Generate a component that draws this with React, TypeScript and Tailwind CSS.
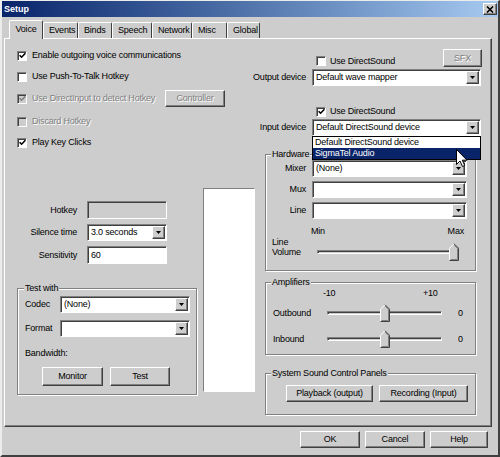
import React from "react";

const RAISED =
  "border border-t-white border-l-white border-r-[#404040] border-b-[#404040] shadow-[inset_-1px_-1px_0_#808080]";
const SUNKEN =
  "border border-t-[#808080] border-l-[#808080] border-r-white border-b-white shadow-[inset_1px_1px_0_#404040]";
const GROUP =
  "border border-[#808080] shadow-[inset_1px_1px_0_#ffffff,1px_1px_0_#ffffff]";
const DIS = "text-[#808080] [text-shadow:1px_1px_0_#ffffff]";

function Check({ checked, disabled }: { checked?: boolean; disabled?: boolean }) {
  return (
    <span
      className={`flex items-center justify-center w-[10px] h-[10px] shrink-0 ${SUNKEN} ${
        disabled ? "bg-[#cdcdcd]" : "bg-white"
      }`}
    >
      {checked && (
        <svg width="7" height="7" viewBox="0 0 7 7">
          <path
            d="M0.6 3.2 L2.6 5.2 L6.4 1.2"
            stroke={disabled ? "#808080" : "#000"}
            strokeWidth="1.6"
            fill="none"
          />
        </svg>
      )}
    </span>
  );
}

function DropBtn() {
  return (
    <span className={`flex items-center justify-center w-[13px] h-full bg-[#cdcdcd] ${RAISED}`}>
      <svg width="5" height="3" viewBox="0 0 5 3">
        <path d="M0 0h5L2.5 3z" fill="#000" />
      </svg>
    </span>
  );
}

function Select({ value, className }: { value?: string; className: string }) {
  return (
    <div className={`flex h-[17px] bg-white p-[1px] ${SUNKEN} ${className}`}>
      <span className="flex-1 flex items-center pl-[2px] whitespace-nowrap overflow-hidden">{value}</span>
      <DropBtn />
    </div>
  );
}

function Btn({
  children,
  className,
  disabled,
}: {
  children: React.ReactNode;
  className: string;
  disabled?: boolean;
}) {
  return (
    <div
      className={`flex items-center justify-center bg-[#cdcdcd] ${RAISED} ${className} ${
        disabled ? DIS : ""
      }`}
    >
      {children}
    </div>
  );
}

function Thumb() {
  return (
    <svg width="10" height="18" viewBox="0 0 10 18">
      <path d="M0 5 L5 0 L10 5 V18 H0 Z" fill="#cdcdcd" />
      <path d="M0.5 17.5 V5.2 L5 0.7" stroke="#fff" fill="none" />
      <path d="M5 0.7 L9.5 5.2 V17.5 H0.5" stroke="#404040" fill="none" />
      <path d="M5.2 2.2 L8.5 5.6 V16.5 H1.5" stroke="#808080" fill="none" />
    </svg>
  );
}

function Slider({ className, thumb }: { className: string; thumb: string }) {
  return (
    <div className={`relative h-[20px] ${className}`}>
      <div className={`mt-[8px] h-[4px] ${SUNKEN} bg-[#cdcdcd]`} />
      <div className={`absolute top-[1px] ${thumb}`}>
        <Thumb />
      </div>
    </div>
  );
}

export default function App() {
  return (
    <div className="relative w-[500px] h-[457px] overflow-hidden bg-[#cdcdcd] font-['Liberation_Sans',Arial,sans-serif] text-[9px] tracking-[-0.2px] leading-none text-black border-l-2 border-r-2 border-t border-b-2 border-l-[#ececec] border-r-[#404040] border-t-[#ececec] border-b-[#404040] flex flex-col select-none">
      {/* Title bar */}
      <div className="h-[16px] shrink-0 flex items-center justify-between bg-linear-to-r from-[#0a246a] to-[#a6caf0] pl-[2px] pr-[1px]">
        <span className="text-white font-bold text-[9px] tracking-[0px]">Setup</span>
        <span className={`w-[14px] h-[12px] flex items-center justify-center bg-[#cdcdcd] ${RAISED}`}>
          <svg width="8" height="7" viewBox="0 0 8 7">
            <path d="M1 0.5 L7 6.5 M7 0.5 L1 6.5" stroke="#000" strokeWidth="1.6" />
          </svg>
        </span>
      </div>

      <div className="flex flex-col px-[2px]">
        {/* Tabs */}
        <div className="mt-[4px] h-[17px] flex items-end pl-[5px]">
          <div className="relative z-10 -mb-px w-[34px] h-[19px] flex items-center justify-center bg-[#cdcdcd] border-t border-l border-r border-t-white border-l-white border-r-[#404040] rounded-t-[2px] pb-[2px]">
            Voice
          </div>
          {[
            ["Events", "w-[35px]"],
            ["Binds", "w-[34px]"],
            ["Speech", "w-[40px]"],
            ["Network", "w-[40px]"],
            ["Misc", "w-[35px]"],
            ["Global", "w-[33px]"],
          ].map(([t, w]) => (
            <div
              key={t}
              className={`${w} h-[16px] flex items-center justify-start pl-[5px] border-t border-l border-r border-t-white border-l-white border-r-[#404040] rounded-t-[2px]`}
            >
              {t}
            </div>
          ))}
        </div>

        {/* Panel */}
        <div className={`w-[488px] h-[389px] flex ${RAISED}`}>
          {/* Left column */}
          <div className="w-[258px] flex flex-col pl-[12px] pt-[8px]">
            <div className="flex items-center h-[17px] gap-[5px]">
              <Check checked />
              <span>Enable outgoing voice communications</span>
            </div>
            <div className="flex items-center h-[17px] gap-[5px] mt-[4px]">
              <Check />
              <span>Use Push-To-Talk Hotkey</span>
            </div>
            <div className="flex items-center h-[17px] mt-[5px]">
              <Check checked disabled />
              <span className={`ml-[5px] w-[133px] whitespace-nowrap ${DIS}`}>Use DirectInput to detect Hotkey</span>
              <Btn disabled className="w-[60px] h-[17px]">
                Controller
              </Btn>
            </div>
            <div className="flex items-center h-[17px] gap-[5px] mt-[6px]">
              <Check disabled />
              <span className={DIS}>Discard Hotkey</span>
            </div>
            <div className="flex items-center h-[17px] gap-[5px] mt-[4px]">
              <Check checked />
              <span>Play Key Clicks</span>
            </div>

            <div className="mt-[37px] flex gap-[6px]">
              <div className="w-[180px] flex flex-col pt-[13px]">
                <div className="flex items-center h-[18px]">
                  <span className="w-[60px] text-right">Hotkey</span>
                  <div className={`ml-[10px] w-[80px] h-[18px] bg-[#cdcdcd] ${SUNKEN}`} />
                </div>
                <div className="flex items-center h-[17px] mt-[5px]">
                  <span className="w-[60px] text-right">Silence time</span>
                  <Select className="ml-[10px] w-[80px]" value="3.0 seconds" />
                </div>
                <div className="flex items-center h-[18px] mt-[5px]">
                  <span className="w-[60px] text-right">Sensitivity</span>
                  <div className={`ml-[10px] w-[80px] h-[18px] bg-white flex items-center pl-[3px] ${SUNKEN}`}>60</div>
                </div>

                <fieldset className={`mt-[19px] w-[180px] px-[6px] pb-[8px] ${GROUP}`}>
                  <legend className="px-[1px] h-[11px] leading-[11px] bg-[#cdcdcd]">Test with</legend>
                  <div className="flex items-center h-[16px] mt-[2px]">
                    <span className="w-[36px] pl-[1px]">Codec</span>
                    <Select className="w-[130px] h-[16px]" value="(None)" />
                  </div>
                  <div className="flex items-center h-[16px] mt-[8px]">
                    <span className="w-[36px] pl-[1px]">Format</span>
                    <Select className="w-[130px] h-[16px]" />
                  </div>
                  <div className="flex items-center h-[12px] mt-[11px] pl-[1px]">Bandwidth:</div>
                  <div className="flex mt-[8px] h-[19px]">
                    <Btn className="ml-[18px] w-[61px] h-[19px]">Monitor</Btn>
                    <Btn className="ml-[7px] w-[60px] h-[19px]">Test</Btn>
                  </div>
                </fieldset>
              </div>
              <div className="w-[52px] h-[204px] bg-white border border-t-[#808080] border-l-[#808080] border-r-white border-b-white" />
            </div>
          </div>

          {/* Right column */}
          <div className="flex-1 flex flex-col">
            <div className="mt-[10px] h-[18px] flex items-end">
              <div className="ml-[53px] flex items-center gap-[4px] h-[12px]">
                <Check />
                <span>Use DirectSound</span>
              </div>
              <Btn disabled className="ml-auto mr-[9px] w-[39px] h-[18px]">
                SFX
              </Btn>
            </div>
            <div className="mt-[2px] h-[17px] flex items-center">
              <div className="w-[43px] flex justify-end whitespace-nowrap">Output device</div>
              <Select className="ml-[6px] w-[169px]" value="Default wave mapper" />
            </div>
            <div className="mt-[19px] ml-[53px] h-[13px] flex items-center gap-[4px]">
              <Check checked />
              <span>Use DirectSound</span>
            </div>
            <div className="mt-[1px] h-[17px] flex items-center relative z-20">
              <div className="w-[43px] flex justify-end whitespace-nowrap">Input device</div>
              <div className="ml-[6px] w-[169px] relative">
                <Select className="w-[169px]" value="Default DirectSound device" />
                <div className="absolute left-0 top-full w-[169px] bg-white border border-black">
                  <div className="h-[11px] flex items-center pl-[2px]">Default DirectSound device</div>
                  <div className="h-[11px] flex items-center pl-[2px] bg-[#0a246a] text-white">SigmaTel Audio</div>
                </div>
              </div>
            </div>

            <fieldset className={`mt-[13px] ml-[2px] w-[211px] pl-[5px] pb-[8px] ${GROUP}`}>
              <legend className="px-[1px] h-[11px] leading-[11px] bg-[#cdcdcd]">Hardware</legend>
              <div className="flex items-center h-[17px]">
                <span className="w-[35px] text-right">Mixer</span>
                <Select className="ml-[6px] w-[155px]" value="(None)" />
              </div>
              <div className="flex items-center h-[17px] mt-[4px]">
                <span className="w-[35px] text-right">Mux</span>
                <Select className="ml-[6px] w-[155px]" />
              </div>
              <div className="flex items-center h-[17px] mt-[4px]">
                <span className="w-[35px] text-right">Line</span>
                <Select className="ml-[6px] w-[155px]" />
              </div>
              <div className="mt-[7px] h-[11px] ml-[40px] w-[153px] flex items-center justify-between">
                <span>Min</span>
                <span>Max</span>
              </div>
              <div className="flex items-start">
                <div className="w-[46px] pl-[1px] leading-[10px]">
                  Line
                  <br />
                  Volume
                </div>
                <Slider className="w-[141px] mt-[5px]" thumb="left-[132px]" />
              </div>
            </fieldset>

            <fieldset className={`mt-[6px] ml-[2px] w-[211px] pl-[5px] pb-[5px] ${GROUP}`}>
              <legend className="px-[1px] h-[11px] leading-[11px] bg-[#cdcdcd]">Amplifiers</legend>
              <div className="flex h-[11px] items-center pl-[52px]">
                <span className="w-[100px]">-10</span>
                <span>+10</span>
              </div>
              <div className="flex items-center h-[20px] mt-[4px]">
                <span className="w-[56px] pl-[2px]">Outbound</span>
                <Slider className="w-[115px]" thumb="left-[53px]" />
                <span className="ml-[16px]">0</span>
              </div>
              <div className="flex items-center h-[20px] mt-[6px]">
                <span className="w-[56px] pl-[2px]">Inbound</span>
                <Slider className="w-[115px]" thumb="left-[53px]" />
                <span className="ml-[16px]">0</span>
              </div>
            </fieldset>

            <fieldset className={`mt-[13px] ml-[2px] w-[211px] pl-[5px] pb-[12px] ${GROUP}`}>
              <legend className="px-[1px] h-[11px] leading-[11px] bg-[#cdcdcd]">System Sound Control Panels</legend>
              <div className="flex mt-[6px] h-[17px]">
                <Btn className="ml-[15px] w-[87px] h-[17px]">Playback (output)</Btn>
                <Btn className="ml-[6px] w-[89px] h-[17px]">Recording (Input)</Btn>
              </div>
            </fieldset>
          </div>
        </div>

        {/* Bottom buttons */}
        <div className="mt-[4px] flex justify-end gap-[5px] pr-[8px]">
          <Btn className="w-[60px] h-[17px]">OK</Btn>
          <Btn className="w-[60px] h-[17px]">Cancel</Btn>
          <Btn className="w-[58px] h-[17px]">Help</Btn>
        </div>
      </div>

      {/* Mouse cursor */}
      <svg className="absolute left-[454px] top-[148px] z-30" width="12" height="19" viewBox="0 0 12 19">
        <path d="M0.5 0.5 V15.5 L4 12 L6.5 17.5 L8.7 16.5 L6.3 11.2 H11 Z" fill="#fff" stroke="#000" />
      </svg>
    </div>
  );
}
